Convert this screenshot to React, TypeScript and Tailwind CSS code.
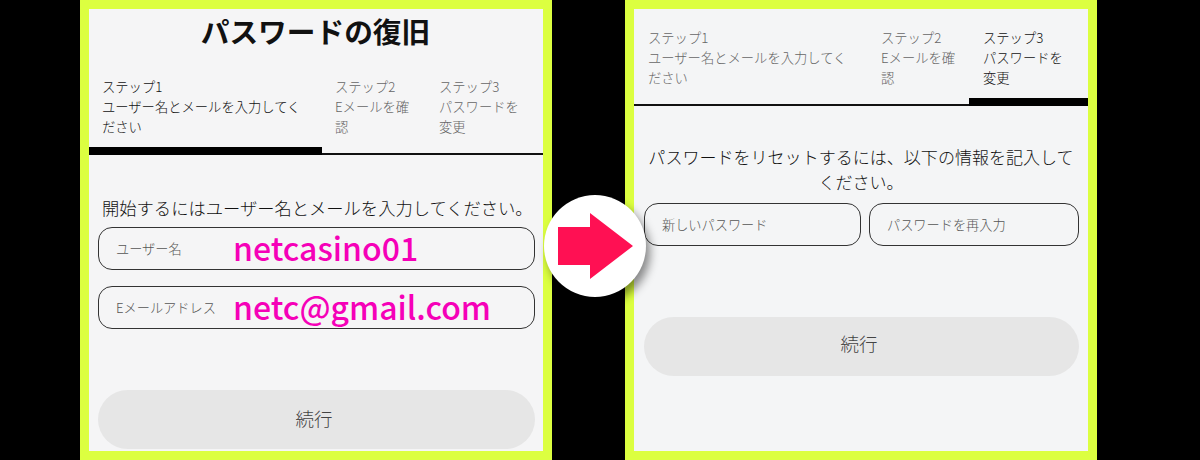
const font = { fontFamily: '"Noto Sans CJK JP", "Noto Sans", sans-serif' };

function Tabs({ active, widths, pad }: { active: number; widths: string[]; pad: string }) {
  const tabs = [
    ["ステップ1", "ユーザー名とメールを入力してく", "ださい"],
    ["ステップ2", "Eメールを確", "認"],
    ["ステップ3", "パスワードを", "変更"],
  ];
  return (
    <div className="flex border-b-2 border-[#111]">
      {tabs.map((lines, i) => (
        <div key={i} className={`${widths[i]} ${pad} -mb-[2px] pr-1 pb-[10px] border-b-8 ${i === active ? "border-black text-[#111]" : "border-transparent text-[#666]"}`}>
          {lines.map((l) => (
            <div key={l} className="text-[13.3px] leading-[20px] font-light whitespace-nowrap">{l}</div>
          ))}
        </div>
      ))}
    </div>
  );
}

function Field({ label, value, className }: { label: string; value?: string; className: string }) {
  return (
    <div className={`${className} h-[43px] flex items-center border border-[#333] rounded-[14px] pl-[17px]`}>
      <span className="w-[117px] shrink-0 text-[13.2px] font-light text-[#555] whitespace-nowrap">{label}</span>
      {value && <span className="text-[32px] leading-[40px] font-medium text-[#f500b8] -mt-[3px] whitespace-nowrap">{value}</span>}
    </div>
  );
}

function Button({ className }: { className: string }) {
  return (
    <div className={`${className} h-[59px] pr-[5px] rounded-full bg-[#e6e6e6] flex items-center justify-center text-[18.5px] font-light text-[#444]`}>続行</div>
  );
}

export default function App() {
  return (
    <div style={font} className="relative w-[1200px] h-[460px] bg-black flex gap-[73px] pl-[80px] overflow-hidden">
      <section className="w-[472px] h-[460px] border-[9px] border-[#dcff40] bg-[#f5f5f6]">
        <h1 className="h-[68px] pt-[4px] pr-[1px] text-center text-[28.7px] leading-[36px] font-bold text-[#111]">パスワードの復旧</h1>
        <Tabs active={0} widths={["w-[233px]", "w-[104px]", "w-[117px]"]} pad="pl-[13px]" />
        <p className="mt-[40px] ml-[13px] text-[17.3px] leading-[25px] font-light text-[#111] whitespace-nowrap">開始するにはユーザー名とメールを入力してください。</p>
        <div className="mt-[7px] mx-[9px] flex flex-col gap-[16px]">
          <Field className="w-[437px]" label="ユーザー名" value="netcasino01" />
          <Field className="w-[437px]" label="Eメールアドレス" value="netc@gmail.com" />
        </div>
        <Button className="mt-[61px] ml-[9px] w-[437px] pb-[2px]" />
      </section>

      <section className="w-[472px] h-[460px] border-[9px] border-[#dcff40] bg-[#f4f5f6]">
        <div className="pt-[19px]">
          <Tabs active={2} widths={["w-[233px]", "w-[102px]", "w-[119px]"]} pad="pl-[14px]" />
        </div>
        <p className="mt-[38px] px-[10px] text-center text-[17.05px] leading-[25px] font-light text-[#111]">パスワードをリセットするには、以下の情報を記入してください。</p>
        <div className="mt-[9px] ml-[10px] flex gap-[8px]">
          <Field className="w-[217px]" label="新しいパスワード" />
          <Field className="w-[210px]" label="パスワードを再入力" />
        </div>
        <Button className="mt-[71px] ml-[10px] w-[435px] pb-[6px]" />
      </section>

      <div className="absolute left-[544px] top-[195px] w-[102px] h-[102px] rounded-full bg-white shadow-[4px_6px_10px_rgba(0,0,0,0.45)]">
        <svg width="102" height="102" viewBox="0 0 102 102">
          <polygon points="14,32 46,32 46,18 89,51 46,84 46,70 14,70" fill="#ff1053" />
        </svg>
      </div>
    </div>
  );
}
